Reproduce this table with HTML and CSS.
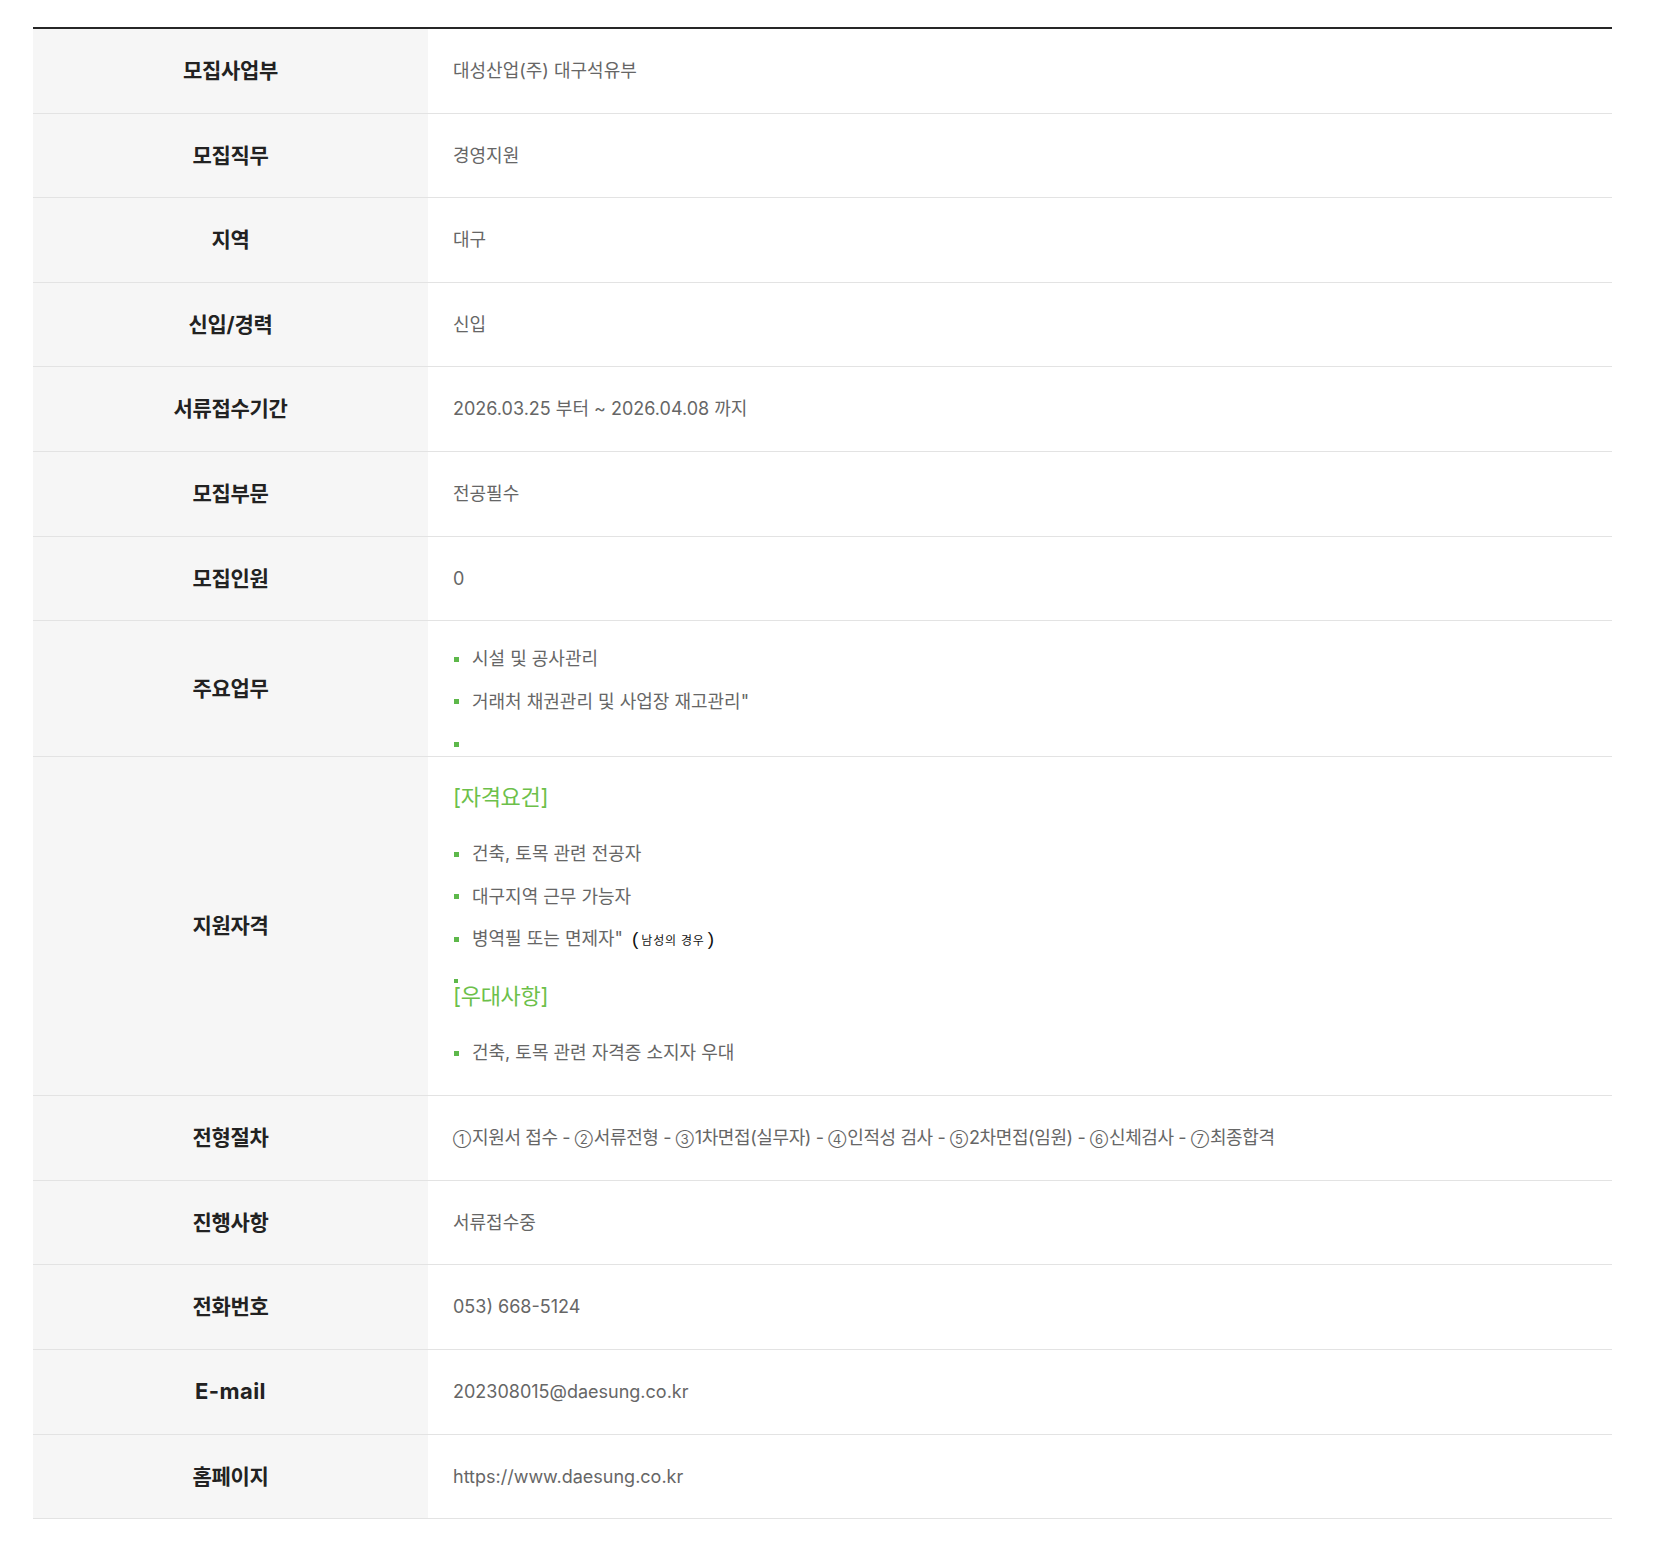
FILE: index.html
```html
<!DOCTYPE html>
<html lang="ko">
<head>
<meta charset="utf-8">
<title>채용 정보</title>
<link rel="stylesheet" href="styles.css">
</head>
<body>
<div class="wrap">
  <table class="info">
    <colgroup><col class="col-head"><col></colgroup>
    <tbody>
      <tr><th>모집사업부</th><td>대성산업(주) 대구석유부</td></tr>
      <tr><th>모집직무</th><td>경영지원</td></tr>
      <tr><th>지역</th><td>대구</td></tr>
      <tr><th>신입/경력</th><td>신입</td></tr>
      <tr><th>서류접수기간</th><td>2026.03.25 부터 ~ 2026.04.08 까지</td></tr>
      <tr><th>모집부문</th><td>전공필수</td></tr>
      <tr><th>모집인원</th><td>0</td></tr>
      <tr>
        <th>주요업무</th>
        <td class="list-cell duty">
          <ul class="dots">
            <li>시설 및 공사관리</li>
            <li>거래처 채권관리 및 사업장 재고관리"</li>
            <li></li>
          </ul>
        </td>
      </tr>
      <tr>
        <th>지원자격</th>
        <td class="list-cell quals">
          <p class="sub">[자격요건]</p>
          <ul class="dots">
            <li>건축, 토목 관련 전공자</li>
            <li>대구지역 근무 가능자</li>
            <li>병역필 또는 면제자"<span class="note">(<small>남성의 경우</small>)</span></li>
          </ul>
          <p class="sub sub-dot">[우대사항]</p>
          <ul class="dots">
            <li>건축, 토목 관련 자격증 소지자 우대</li>
          </ul>
        </td>
      </tr>
      <tr><th>전형절차</th><td class="steps"><span class="n">①</span>지원서 접수 - <span class="n">②</span>서류전형 - <span class="n">③</span>1차면접(실무자) - <span class="n">④</span>인적성 검사 - <span class="n">⑤</span>2차면접(임원) - <span class="n">⑥</span>신체검사 - <span class="n">⑦</span>최종합격</td></tr>
      <tr><th>진행사항</th><td>서류접수중</td></tr>
      <tr><th>전화번호</th><td>053) 668-5124</td></tr>
      <tr><th class="latin">E-mail</th><td>202308015@daesung.co.kr</td></tr>
      <tr><th>홈페이지</th><td>https://www.daesung.co.kr</td></tr>
    </tbody>
  </table>
</div>
</body>
</html>
```

FILE: styles.css
```css
* { box-sizing: border-box; }

body {
  margin: 0;
  background: #fff;
  font-family: Inter, "Noto Sans CJK KR", sans-serif;
}

.wrap {
  padding: 27px 56px 43px 33px;
}

.info {
  width: 1579px;
  border-collapse: collapse;
  table-layout: fixed;
  border-top: 2px solid #262626;
}

.col-head { width: 395px; }

.info th,
.info td {
  padding: 29px 25px;
  height: 84.6px;
  line-height: 25.6px;
  border-bottom: 1px solid #e3e3e3;
  vertical-align: middle;
}

.info th {
  background: #f6f6f6;
  color: #222;
  font-size: 21px;
  font-weight: 700;
  text-align: center;
  letter-spacing: -0.3px;
}

.info th.latin {
  font-size: 22px;
  letter-spacing: 0.4px;
}

.info td {
  color: #666;
  font-size: 18px;
  text-align: left;
  letter-spacing: 0;
}

.info td.steps {
  letter-spacing: -0.4px;
  white-space: nowrap;
}

.n {
  font-size: 13px;
  line-height: 10px;
  margin-right: 1px;
  letter-spacing: 0;
}

.info td.list-cell {
  padding: 26px 25px 0;
  vertical-align: top;
}

.info td.quals { padding-bottom: 30px; }

.dots {
  list-style: none;
  margin: 0;
  padding: 0;
  display: flex;
  flex-direction: column;
  gap: 18.5px;
}

.dots li {
  display: flex;
  align-items: center;
  gap: 13px;
  height: 24px;
  line-height: 24px;
  white-space: pre;
}

.dots li::before {
  content: "";
  flex: none;
  width: 5px;
  height: 5px;
  margin-left: 1px;
  background: #5db84a;
}

.sub {
  margin: 0 0 31px;
  color: #6cc04a;
  font-size: 22px;
  line-height: 28px;
  height: 28px;
  letter-spacing: -0.3px;
}

.dots + .sub { margin-top: 31px; }

.sub-dot { position: relative; }

.sub-dot::before {
  content: "";
  position: absolute;
  left: 1px;
  top: -3px;
  width: 4px;
  height: 4px;
  background: #5db84a;
}

.note {
  margin-left: -4px;
  color: #111;
  font-family: "Liberation Sans", "Noto Sans CJK KR", sans-serif;
  font-size: 19px;
  font-weight: 400;
  letter-spacing: 0;
}

.note small {
  font-family: "Noto Sans CJK KR", sans-serif;
  font-size: 12px;
  letter-spacing: 0.8px;
  padding: 0 3px;
}
```
